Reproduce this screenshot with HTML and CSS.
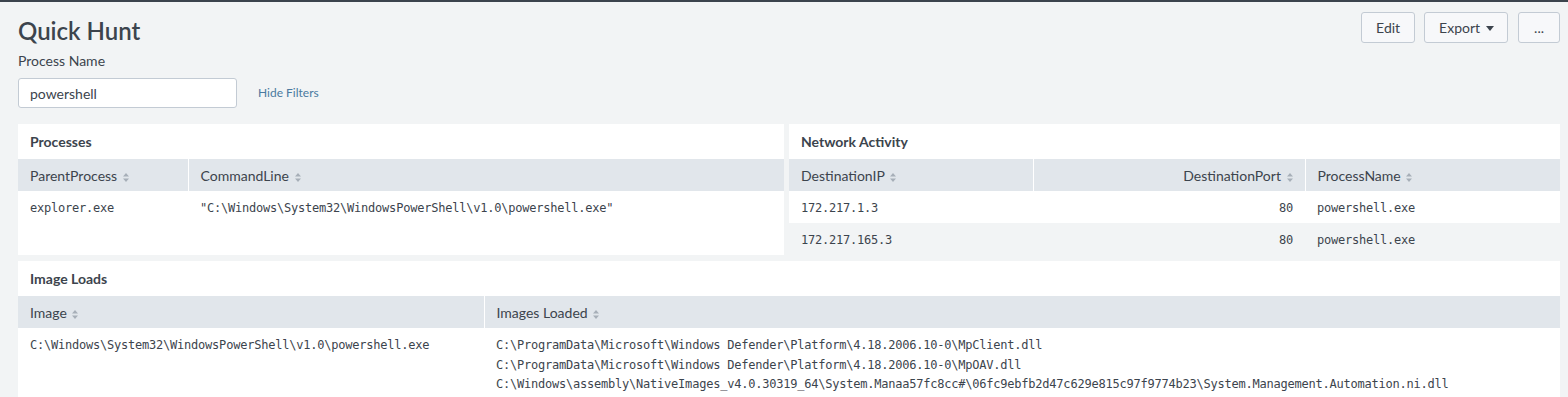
FILE: index.html
```html
<!DOCTYPE html>
<html lang="en">
<head>
    <meta charset="UTF-8">
    <title>Quick Hunt</title>
    <link rel="stylesheet" href="styles.css">
</head>
<body>

    <div class="top-bar"></div>

    <div class="dashboard">
        <div class="dashboard-head">
            <h1 class="dashboard-title">Quick Hunt</h1>
            <div class="dashboard-actions">
                <button class="btn">Edit</button>
                <button class="btn btn-export">Export <span class="caret"></span></button>
                <button class="btn btn-more">...</button>
            </div>
        </div>

        <div class="filters">
            <div class="field">
                <label class="field-label" for="process-name">Process Name</label>
                <input class="text-input" id="process-name" type="text" value="powershell">
            </div>
            <a class="hide-filters" href="#">Hide Filters</a>
        </div>

        <div class="panel-row panel-row-split">
            <section class="panel">
                <h2 class="panel-title">Processes</h2>
                <table class="data-table">
                    <colgroup><col style="width:170px"><col></colgroup>
                    <thead>
                        <tr>
                            <th>ParentProcess <svg class="sort" viewBox="0 0 6 9" width="6" height="9"><path d="M3 0L6 3.5H0zM3 9L0 5.5h6z"/></svg></th>
                            <th>CommandLine <svg class="sort" viewBox="0 0 6 9" width="6" height="9"><path d="M3 0L6 3.5H0zM3 9L0 5.5h6z"/></svg></th>
                        </tr>
                    </thead>
                    <tbody>
                        <tr>
                            <td>explorer.exe</td>
                            <td>"C:\Windows\System32\WindowsPowerShell\v1.0\powershell.exe"</td>
                        </tr>
                    </tbody>
                </table>
            </section>

            <section class="panel">
                <h2 class="panel-title">Network Activity</h2>
                <table class="data-table">
                    <colgroup><col style="width:244px"><col style="width:272px"><col></colgroup>
                    <thead>
                        <tr>
                            <th>DestinationIP <svg class="sort" viewBox="0 0 6 9" width="6" height="9"><path d="M3 0L6 3.5H0zM3 9L0 5.5h6z"/></svg></th>
                            <th class="num">DestinationPort <svg class="sort" viewBox="0 0 6 9" width="6" height="9"><path d="M3 0L6 3.5H0zM3 9L0 5.5h6z"/></svg></th>
                            <th>ProcessName <svg class="sort" viewBox="0 0 6 9" width="6" height="9"><path d="M3 0L6 3.5H0zM3 9L0 5.5h6z"/></svg></th>
                        </tr>
                    </thead>
                    <tbody>
                        <tr>
                            <td>172.217.1.3</td>
                            <td class="num">80</td>
                            <td>powershell.exe</td>
                        </tr>
                        <tr>
                            <td>172.217.165.3</td>
                            <td class="num">80</td>
                            <td>powershell.exe</td>
                        </tr>
                    </tbody>
                </table>
            </section>
        </div>

        <div class="panel-row">
            <section class="panel">
                <h2 class="panel-title">Image Loads</h2>
                <table class="data-table">
                    <colgroup><col style="width:466px"><col></colgroup>
                    <thead>
                        <tr>
                            <th>Image <svg class="sort" viewBox="0 0 6 9" width="6" height="9"><path d="M3 0L6 3.5H0zM3 9L0 5.5h6z"/></svg></th>
                            <th>Images Loaded <svg class="sort" viewBox="0 0 6 9" width="6" height="9"><path d="M3 0L6 3.5H0zM3 9L0 5.5h6z"/></svg></th>
                        </tr>
                    </thead>
                    <tbody>
                        <tr>
                            <td>C:\Windows\System32\WindowsPowerShell\v1.0\powershell.exe</td>
                            <td>
                                <div>C:\ProgramData\Microsoft\Windows Defender\Platform\4.18.2006.10-0\MpClient.dll</div>
                                <div>C:\ProgramData\Microsoft\Windows Defender\Platform\4.18.2006.10-0\MpOAV.dll</div>
                                <div>C:\Windows\assembly\NativeImages_v4.0.30319_64\System.Manaa57fc8cc#\06fc9ebfb2d47c629e815c97f9774b23\System.Management.Automation.ni.dll</div>
                            </td>
                        </tr>
                    </tbody>
                </table>
            </section>
        </div>
    </div>

</body>
</html>
```

FILE: styles.css
```css
* {
    margin: 0;
    padding: 0;
    box-sizing: border-box;
}

body {
    background-color: #f2f4f5;
    color: #3c444d;
    font-family: 'Lato', 'Open Sans', sans-serif;
    font-size: 14px;
    overflow: hidden;
}

.top-bar {
    height: 2px;
    background-color: #3c444d;
}

.dashboard {
    padding: 0 8px 0 18px;
}

.dashboard-head {
    display: flex;
    justify-content: space-between;
    align-items: flex-start;
    padding-top: 10px;
}

.dashboard-title {
    margin-top: 5px;
    font-size: 24px;
    line-height: 28px;
    font-weight: 600;
}

.dashboard-actions {
    display: flex;
    gap: 9px;
}

.btn {
    height: 31px;
    padding: 0 14px;
    font-family: inherit;
    font-size: 14px;
    color: #3c444d;
    background-color: #f7f8fa;
    border: 1px solid #c3cbd4;
    border-radius: 3px;
    display: flex;
    align-items: center;
    gap: 6px;
}

.btn-export {
    padding: 0 13px 0 14px;
}

.btn-more {
    margin-left: 1px;
    padding: 0 15px;
}

.caret {
    width: 0;
    height: 0;
    border-left: 4px solid transparent;
    border-right: 4px solid transparent;
    border-top: 5px solid #3c444d;
    margin-top: 1px;
}

.filters {
    display: flex;
    align-items: flex-end;
    margin-top: 7px;
}

.field {
    display: flex;
    flex-direction: column;
}

.field-label {
    line-height: 18px;
}

.text-input {
    margin-top: 8px;
    width: 219px;
    height: 30px;
    padding: 0 11px;
    font-family: inherit;
    font-size: 14px;
    color: #3c444d;
    background-color: #fff;
    border: 1px solid #c3cbd4;
    border-radius: 3px;
    outline: none;
}

.hide-filters {
    margin-left: 21px;
    line-height: 30px;
    font-size: 12px;
    color: #4a7aa0;
    text-decoration: none;
}

.panel-row {
    margin-top: 6px;
}

.panel-row-split {
    margin-top: 16px;
    display: grid;
    grid-template-columns: 766fr 771fr;
    gap: 5px;
}

.panel {
    background-color: #fff;
}

.panel-title {
    height: 35px;
    padding: 0 12px;
    line-height: 35px;
    font-size: 14px;
    font-weight: 700;
}

.data-table {
    width: 100%;
    border-collapse: collapse;
    table-layout: fixed;
}

.data-table th {
    height: 32px;
    padding: 0 12px;
    background-color: #e1e6eb;
    text-align: left;
    font-weight: 400;
    font-size: 14px;
    white-space: nowrap;
    border-left: 1px solid #fff;
}

.data-table th:first-child {
    border-left: none;
}

.data-table td {
    padding: 8px 12px 4.5px;
    line-height: 19.5px;
    font-family: 'DejaVu Sans Mono', monospace;
    font-size: 12px;
    letter-spacing: -0.22px;
    white-space: nowrap;
    vertical-align: top;
}

.data-table tbody tr:nth-child(even) td {
    background-color: #f2f4f5;
}

.data-table .num {
    text-align: right;
}

.sort {
    margin-left: 2px;
    fill: #a7afb8;
    vertical-align: -1px;
}
```
